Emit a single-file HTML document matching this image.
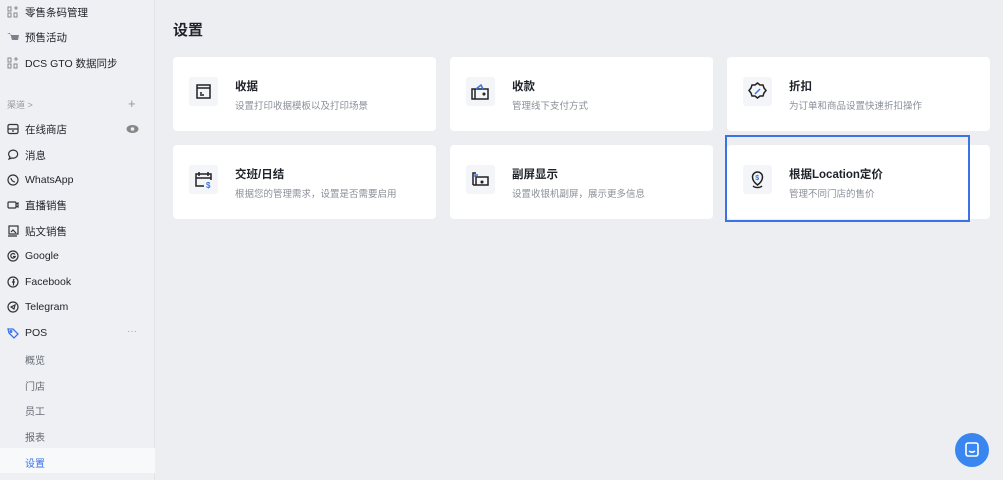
<!DOCTYPE html>
<html><head><meta charset="utf-8"><style>
*{margin:0;padding:0;box-sizing:border-box}
body{width:1003px;height:480px;overflow:hidden;background:#eceef1;font-family:"Liberation Sans","Noto Sans CJK SC",sans-serif;position:relative;color:#1f2329}
.sb{position:absolute;left:0;top:0;width:155px;height:480px;background:#eef0f3;border-right:1px solid #e2e4e8}
.it{position:absolute;left:7px;height:20px;display:flex;align-items:center;font-size:10.5px;color:#1f2329}
.it svg{width:12px;height:12px;margin-right:6px}
.sub{position:absolute;left:25px;font-size:10px;color:#646a73}
.sel{position:absolute;left:0;top:448px;width:155px;height:25px;background:#f8f9fb}
h1{position:absolute;left:173px;top:19px;font-size:15px;font-weight:600}
.card{position:absolute;width:263px;height:74px;background:#fff;border-radius:4px}
.ic{position:absolute;left:16px;top:20px;width:29px;height:29px;background:#f3f5f8;border-radius:3px}
.ic svg{width:29px;height:29px}
.t{position:absolute;left:62px;top:21px;font-size:11.5px;font-weight:600}
.d{position:absolute;left:62px;top:41px;font-size:9.5px;color:#8a8f98}
</style></head><body>
<div class="sb">
<div class="sel"></div>
<div class="it" style="top:2px"><svg viewBox="0 0 12 12" fill="none" stroke="#888" stroke-width="1"><rect x="1" y="1" width="3" height="4"/><rect x="1" y="7" width="3" height="4"/><path d="M7 2h4M9 0v4M7 7h3v4H7z"/></svg>零售条码管理</div>
<div class="it" style="top:27px"><svg viewBox="0 0 12 12" fill="#7a8290"><path d="M0 2h3l2 7h6l1-5H5z"/></svg>预售活动</div>
<div class="it" style="top:53px"><svg viewBox="0 0 12 12" fill="none" stroke="#888" stroke-width="1"><rect x="1" y="1" width="3" height="4"/><rect x="1" y="7" width="3" height="4"/><path d="M7 2h4M9 0v4M7 7h3v4H7z"/></svg>DCS GTO 数据同步</div>
<div class="it" style="top:94px;font-size:9px;color:#999">渠道 &gt;</div>
<div style="position:absolute;left:128px;top:96px;font-size:13px;color:#999">+</div>
<div class="it" style="top:119px"><svg viewBox="0 0 12 12" fill="none" stroke="#333" stroke-width="1.2"><rect x="1" y="1.5" width="10" height="9" rx="1.5"/><path d="M1 6h10M5 8h2"/></svg>在线商店</div>
<svg style="position:absolute;left:126px;top:124px" width="13" height="10" viewBox="0 0 13 10"><ellipse cx="6.5" cy="5" rx="6" ry="4" fill="#888"/><circle cx="6.5" cy="5" r="1.8" fill="#eef0f3"/></svg>
<div class="it" style="top:145px"><svg viewBox="0 0 12 12" fill="none" stroke="#333" stroke-width="1.2"><path d="M2 10l1-2a4.5 4 0 1 1 2 1z"/></svg>消息</div>
<div class="it" style="top:170px"><svg viewBox="0 0 12 12" fill="none" stroke="#333" stroke-width="1.2"><circle cx="6" cy="6" r="5"/><path d="M4 4c0 2 2 4 4 4"/></svg>WhatsApp</div>
<div class="it" style="top:195px"><svg viewBox="0 0 12 12" fill="none" stroke="#333" stroke-width="1.2"><rect x="1" y="3" width="8" height="6" rx="1"/><path d="M9 5l2-1v4l-2-1"/></svg>直播销售</div>
<div class="it" style="top:221px"><svg viewBox="0 0 12 12" fill="none" stroke="#333" stroke-width="1.2"><rect x="2" y="1" width="9" height="8"/><path d="M1 11h9M4 7l2-2 3 3"/></svg>贴文销售</div>
<div class="it" style="top:246px"><svg viewBox="0 0 12 12" fill="none" stroke="#333" stroke-width="1.2"><circle cx="6" cy="6" r="5"/><path d="M8 4.5A2.3 2.3 0 1 0 8.3 6.5H6"/></svg>Google</div>
<div class="it" style="top:272px"><svg viewBox="0 0 12 12" fill="none" stroke="#333" stroke-width="1.2"><circle cx="6" cy="6" r="5"/><path d="M7.5 3.5H6.5v6M5 6h3"/></svg>Facebook</div>
<div class="it" style="top:297px"><svg viewBox="0 0 12 12" fill="none" stroke="#333" stroke-width="1.2"><circle cx="6" cy="6" r="5"/><path d="M4 6l4-2-1 4z"/></svg>Telegram</div>
<div class="it" style="top:323px"><svg viewBox="0 0 12 12" fill="none" stroke="#3b73e6" stroke-width="1.3"><path d="M1 2l5 0 5 5-4 4-5-5z"/><circle cx="4" cy="4.5" r="0.8"/></svg>POS</div>
<div style="position:absolute;left:127px;top:326px;font-size:10px;color:#aaa">···</div>
<div class="sub" style="top:352px">概览</div>
<div class="sub" style="top:378px">门店</div>
<div class="sub" style="top:403px">员工</div>
<div class="sub" style="top:429px">报表</div>
<div class="sub" style="top:455px;color:#3b73e6">设置</div>
</div>
<h1>设置</h1>
<div class="card" style="left:173px;top:57px"><div class="ic"><svg viewBox="0 0 29 29" fill="none" stroke="#222" stroke-width="1.5"><rect x="8" y="8" width="13" height="13"/><path d="M8 11h13M11 16h2M11 18h4" /></svg></div><div class="t">收据</div><div class="d">设置打印收据模板以及打印场景</div></div>
<div class="card" style="left:450px;top:57px"><div class="ic"><svg viewBox="0 0 29 29" fill="none" stroke="#222" stroke-width="1.5"><rect x="6" y="12" width="16" height="10"/><path d="M9 12v10"/><path d="M17 12l-2-4-5 4" stroke="#3b73e6"/><circle cx="18" cy="17" r=".8" fill="#333"/></svg></div><div class="t">收款</div><div class="d">管理线下支付方式</div></div>
<div class="card" style="left:727px;top:57px"><div class="ic"><svg viewBox="0 0 29 29" fill="none" stroke="#222" stroke-width="1.5"><path d="M14.5 6l2.5 2 3 0 1 3 2 2.5-2 2.5-1 3-3 0-2.5 2-2.5-2-3 0-1-3-2-2.5 2-2.5 1-3 3 0z"/><path d="M12 17l5-5" stroke="#3b73e6"/></svg></div><div class="t">折扣</div><div class="d">为订单和商品设置快速折扣操作</div></div>
<div class="card" style="left:173px;top:145px"><div class="ic"><svg viewBox="0 0 29 29" fill="none" stroke="#222" stroke-width="1.5"><path d="M15 21H7V9h15v6M7 13h15M10 7v4M19 7v4"/><text x="17" y="23" font-size="8" fill="#3b73e6" stroke="none" font-weight="bold" font-family="Liberation Sans">$</text></svg></div><div class="t">交班/日结</div><div class="d">根据您的管理需求，设置是否需要启用</div></div>
<div class="card" style="left:450px;top:145px"><div class="ic"><svg viewBox="0 0 29 29" fill="none" stroke="#222" stroke-width="1.5"><path d="M10 8H7v12M7 20h15V12H10v8"/><path d="M9 12v-2h3" stroke="#3b73e6"/><circle cx="16" cy="17" r=".8" fill="#333"/></svg></div><div class="t">副屏显示</div><div class="d">设置收银机副屏，展示更多信息</div></div>
<div class="card" style="left:727px;top:145px"><div class="ic"><svg viewBox="0 0 29 29" fill="none" stroke="#222" stroke-width="1.5"><path d="M14.5 20c-4-3-5-6-5-8a5 5 0 0 1 10 0c0 2-1 5-5 8z"/><path d="M10 21c2 2 7 2 9 0"/><text x="12.3" y="15" font-size="7" fill="#3b73e6" stroke="none" font-weight="bold" font-family="Liberation Sans">$</text></svg></div><div class="t">根据Location定价</div><div class="d">管理不同门店的售价</div></div>
<div style="position:absolute;left:725px;top:135px;width:245px;height:87px;border:2px solid #3b73e6"></div>
<div style="position:absolute;left:955px;top:433px;width:34px;height:34px;border-radius:50%;background:#3a86f0"><svg width="34" height="34" viewBox="0 0 34 34" fill="none" stroke="#fff" stroke-width="1.6"><rect x="11" y="10" width="12" height="13" rx="2"/><path d="M14 18c2 1.5 4 1.5 6 0"/></svg></div>
</body></html>
